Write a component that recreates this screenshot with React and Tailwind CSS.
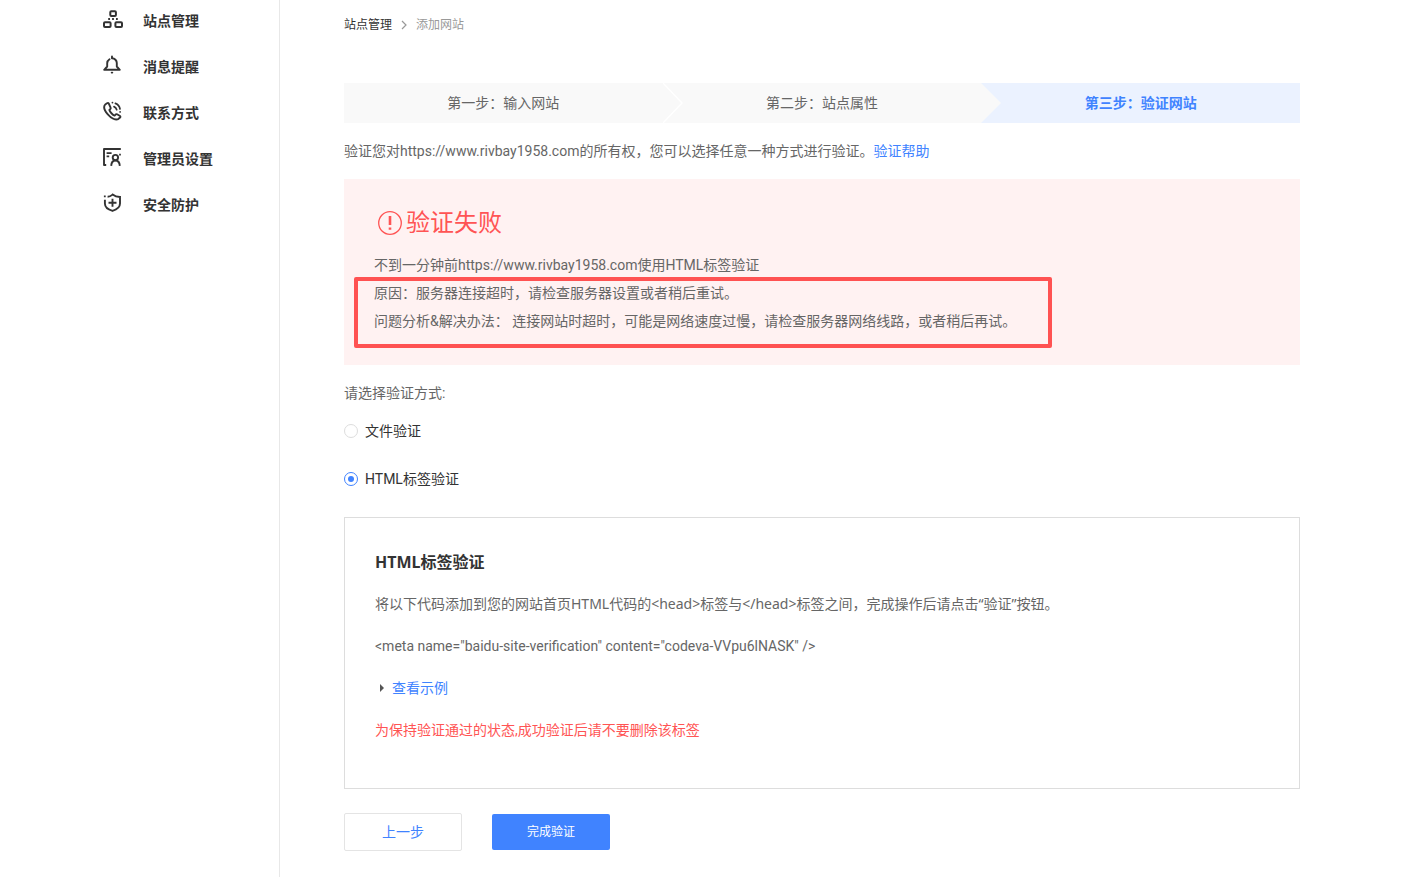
import React, { useState } from 'react';

const SitesIcon = () => (
    <svg className="w-5 h-5" viewBox="0 0 20 20" fill="none" stroke="currentColor" strokeWidth="2">
        <rect x="7.3" y="2.2" width="5.6" height="4.8" rx="1" />
        <rect x="1" y="13.2" width="6.6" height="4.8" rx="1" />
        <rect x="12.4" y="13.2" width="6.6" height="4.8" rx="1" />
        <path d="M5.2 10h1.8M9.1 10h1.8M13 10h1.8" />
    </svg>
);

const BellIcon = () => (
    <svg className="w-5 h-5" viewBox="0 0 20 20" fill="none" stroke="currentColor" strokeWidth="1.9" strokeLinecap="round" strokeLinejoin="round">
        <path d="M6.5 4.2A4.8 4.8 0 0 0 4.2 8.3V11.5L1.2 14.8H16.8L13.8 11.5V8.3A4.9 4.9 0 0 0 9 3.2" />
        <path d="M9 1.4v1.4M8.7 17.6h.6" />
    </svg>
);

const PhoneIcon = () => (
    <svg className="w-5 h-5" viewBox="0 0 20 20" fill="none" stroke="currentColor" strokeWidth="1.9" strokeLinecap="round" strokeLinejoin="round">
        <path d="M4 2.3 2.2 3.5C.4 5.6 1.2 9.2 4.6 13.1c3.6 4.2 8 6.2 10.6 5l1.9-1.5c.5-.6.4-1.2-.1-1.6l-2.9-1.7c-.6-.3-1.2-.2-1.6.3l-.9 1c-1.9-.6-4.8-3.8-5.2-5.6l1-1.1c.4-.5.4-1 .1-1.5L5.8 2.6c-.4-.6-1.1-.7-1.8-.3Z" />
        <path d="M9.4 1.6h.1M12.4 2.4c2.5 1 4.2 3 4.6 5.6M11 5.6c1.4.6 2.3 1.6 2.7 3.1M17.1 10.8v.1" strokeWidth="1.7" />
    </svg>
);

const AdminIcon = () => (
    <svg className="w-5 h-5" viewBox="0 0 20 20" fill="none" stroke="currentColor" strokeWidth="1.9">
        <path d="M3.2 18H1V2h16.8" strokeLinejoin="round" />
        <path d="M17 6.8v1.8M3.6 6.1h5M3.6 9.4h2.6" strokeWidth="1.7" />
        <circle cx="12.4" cy="10.6" r="2.7" />
        <path d="M8.2 18.9c.2-3.4 1.8-5.4 4.2-5.4s4.2 2 4.4 5.4" />
    </svg>
);

const ShieldIcon = () => (
    <svg className="w-5 h-5" viewBox="0 0 20 20" fill="none" stroke="currentColor" strokeWidth="1.9">
        <path d="M4.6 3.8c2 0 3.6-1 5-2.2 2 1.6 4.4 2.4 7.4 2.4v6.5c0 3.6-3.2 6.1-7.5 7.4-4.4-1.3-7.6-3.8-7.6-7.4V6.8" />
        <path d="M9.5 5.8v8M5.5 9.8h8M.9 3.4h1.8" />
    </svg>
);

const menuItems = [
    { label: '站点管理', icon: SitesIcon },
    { label: '消息提醒', icon: BellIcon },
    { label: '联系方式', icon: PhoneIcon },
    { label: '管理员设置', icon: AdminIcon },
    { label: '安全防护', icon: ShieldIcon },
];

const Sidebar = () => (
    <aside className="w-[280px] shrink-0 border-r border-[#e8e8e8] pt-[11px]">
        <nav className="flex flex-col gap-[26px] pl-[103px]">
            {menuItems.map(({ label, icon: Icon }) => (
                <a key={label} href="#" className="flex items-start text-sm leading-5 font-bold text-[#333]">
                    <span className="-mt-0.5 mr-5"><Icon /></span>
                    {label}
                </a>
            ))}
        </nav>
    </aside>
);

const Steps = () => (
    <ol className="mt-[50px] flex h-10 text-sm leading-10 text-center text-[#666]">
        <li className="relative flex-1 bg-[#f9f9f9]">
            第一步：输入网站
            <svg className="absolute left-full top-0 z-10 h-10 w-5" viewBox="0 0 20 40" fill="#f9f9f9" stroke="#fff" strokeWidth="1.4">
                <path d="M0 0 19 20 0 40" />
            </svg>
        </li>
        <li className="relative flex-1 bg-[#f9f9f9]">
            第二步：站点属性
            <svg className="absolute left-full top-0 z-10 h-10 w-5" viewBox="0 0 20 40" fill="#f9f9f9">
                <path d="M0 0 20 20 0 40" />
            </svg>
        </li>
        <li className="flex-1 bg-[#ebf2ff] font-bold text-[#4083ff]">第三步：验证网站</li>
    </ol>
);

const FailureNotice = () => (
    <section className="mt-[14px] bg-[#fff2f2] px-[30px] pt-7 pb-[30px]">
        <h2 className="flex items-center gap-1 pl-1 text-2xl leading-8 text-[#ff5454]">
            <svg className="w-6 h-6" viewBox="0 0 24 24" fill="none" stroke="currentColor">
                <circle cx="12" cy="12" r="11.3" strokeWidth="1.3" />
                <path d="M12 5v9M12 16.5v2.2" strokeWidth="2.6" />
            </svg>
            验证失败
        </h2>
        <p className="mt-3">不到一分钟前https://www.rivbay1958.com使用HTML标签验证</p>
        <div className="relative">
            <p>原因：服务器连接超时，请检查服务器设置或者稍后重试。</p>
            <p>问题分析&amp;解决办法： 连接网站时超时，可能是网络速度过慢，请检查服务器网络线路，或者稍后再试。</p>
            <span className="absolute -left-5 -top-0.5 h-[71px] w-[698px] rounded-xs border-4 border-[#ff5252]"></span>
        </div>
    </section>
);

const methods = [
    { value: 'file', label: '文件验证' },
    { value: 'html', label: 'HTML标签验证' },
];

const App = () => {
    const [method, setMethod] = useState('html');

    return (
        <div className="flex min-h-screen bg-white font-['Roboto','Noto_Sans_CJK_SC',sans-serif]">
            <Sidebar />
            <main className="flex-1 pl-16 pr-[113px] pt-[17px] pb-6 text-sm leading-7 text-[#666]">
                <div className="flex items-center text-xs leading-4">
                    <a href="#" className="text-[#333]">站点管理</a>
                    <svg className="mx-[9px] w-1.5 h-2.5" viewBox="0 0 6 10" fill="none" stroke="#999" strokeWidth="1.2">
                        <path d="m1 1 4 4-4 4" />
                    </svg>
                    <span className="text-[#999]">添加网站</span>
                </div>

                <Steps />

                <p className="mt-[14px]">
                    验证您对https://www.rivbay1958.com的所有权，您可以选择任意一种方式进行验证。
                    <a href="#" className="text-[#4083ff]">验证帮助</a>
                </p>

                <FailureNotice />

                <fieldset className="mt-[14px]">
                    <legend>请选择验证方式:</legend>
                    <div className="mt-[10px] flex flex-col items-start gap-5 text-[#333]">
                        {methods.map((item) => (
                            <label key={item.value} className="flex items-center gap-[7px]">
                                <input
                                    type="radio"
                                    name="method"
                                    value={item.value}
                                    checked={method === item.value}
                                    onChange={() => setMethod(item.value)}
                                    className="grid size-[14px] appearance-none place-items-center rounded-full border border-[#ddd] checked:border-[#4083ff] checked:before:size-1.5 checked:before:rounded-full checked:before:bg-[#4083ff] checked:before:content-['']"
                                />
                                {item.label}
                            </label>
                        ))}
                    </div>
                </fieldset>

                <section className="mt-6 flex flex-col gap-[14px] border border-[#ddd] px-[30px] pt-[30px] pb-11">
                    <h3 className="font-['Noto_Sans','Noto_Sans_CJK_SC',sans-serif] text-base leading-7 font-bold text-[#333]">HTML标签验证</h3>
                    <p className="font-['Noto_Sans','Noto_Sans_CJK_SC',sans-serif]">将以下代码添加到您的网站首页HTML代码的&lt;head&gt;标签与&lt;/head&gt;标签之间，完成操作后请点击“验证”按钮。</p>
                    <p>{'<meta name="baidu-site-verification" content="codeva-VVpu6lNASK" />'}</p>
                    <p className="flex items-center gap-2 pl-[5px]">
                        <svg className="w-1 h-2" viewBox="0 0 4 8" fill="#555"><path d="M0 0 4 4 0 8Z" /></svg>
                        <a href="#" className="text-[#4083ff]">查看示例</a>
                    </p>
                    <p className="text-[#ff5454]">为保持验证通过的状态,成功验证后请不要删除该标签</p>
                </section>

                <div className="mt-6 flex items-center gap-[30px]">
                    <button className="h-[38px] w-[118px] rounded-xs border border-[#e4e4e4] text-[#4083ff]">上一步</button>
                    <button className="h-9 w-[118px] rounded-xs bg-[#4083ff] text-xs text-white">完成验证</button>
                </div>
            </main>
        </div>
    );
};

export default App;
